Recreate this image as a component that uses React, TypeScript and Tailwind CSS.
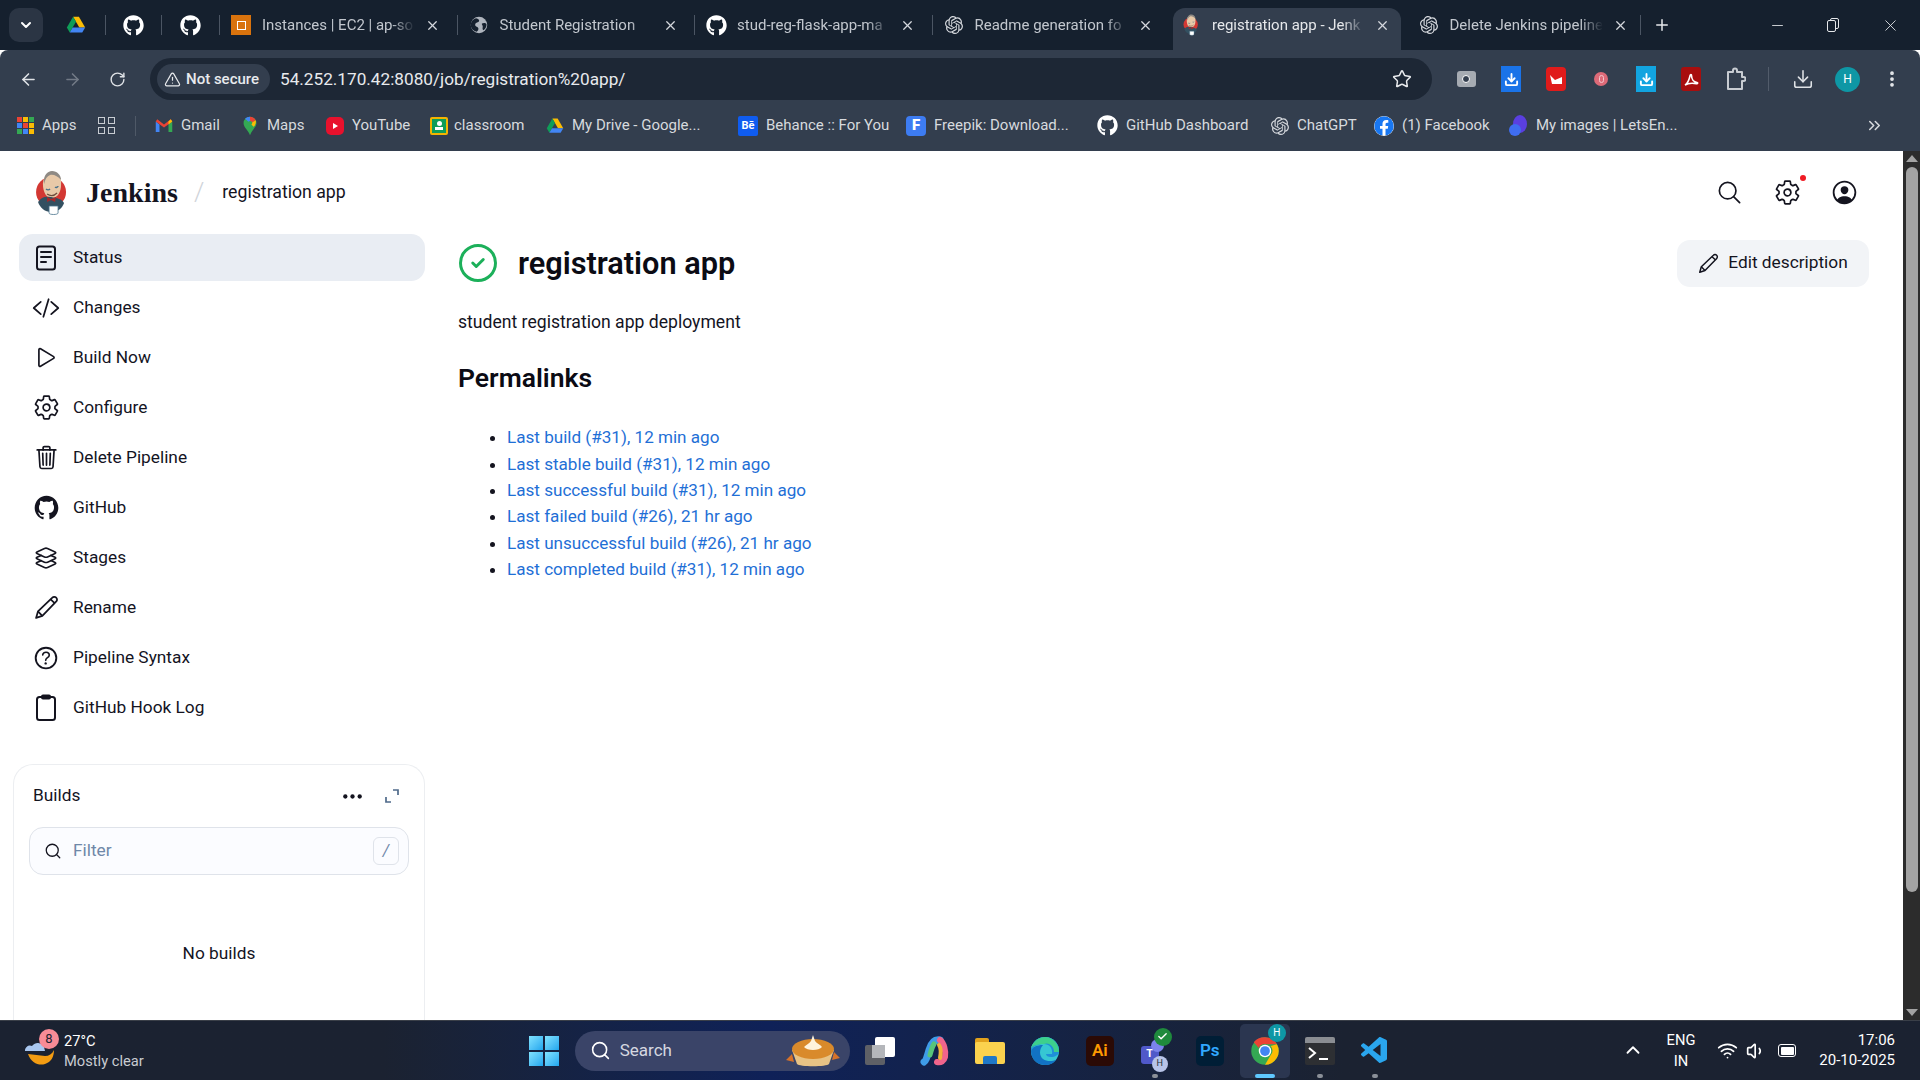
import React from 'react';
import {
  ArrowLeft, ArrowRight, RotateCw, Star, Download, EllipsisVertical, X, Plus, Minus, ChevronDown,
  TriangleAlert, ChevronsRight, Search, ChevronUp, Wifi, Volume1, Check, CircleCheck,
} from 'lucide-react';
import { FaGithub, FaFacebook } from 'react-icons/fa';
import { SiOpenai } from 'react-icons/si';
import { VscVscode } from 'react-icons/vsc';
import {
  IoCodeSlashOutline, IoPlayOutline, IoSettingsOutline, IoTrashOutline, IoLogoGithub, IoLayersOutline,
  IoHelpCircleOutline, IoSearchOutline, IoPersonCircleOutline, IoEllipsisHorizontal,
} from 'react-icons/io5';

const DriveIcon = ({ size = 18 }: { size?: number }) => (
  <svg width={size} height={size} viewBox="0 0 24 24">
    <path d="M8.5 2h7l7.5 13h-7z" fill="#fbbc04" />
    <path d="M8.5 2 1 15l3.5 6 7.5-13z" fill="#0f9d58" />
    <path d="M4.5 21h15l3.5-6H8z" fill="#4285f4" />
  </svg>
);

const GlobeIcon = () => (
  <svg width="18" height="18" viewBox="0 0 24 24">
    <circle cx="12" cy="12" r="11" fill="#aeb4bd" />
    <path d="M8 3c3 1 5 2 4 4s-4 1-5 4 3 3 4 5-1 4-2 5C4 20 1 16 1 12 1 8 4 4 8 3zM16 10c2-1 5-1 6 1 0 3-1 6-4 8-2-1-1-3-1-5s-2-3-1-4z" fill="#15202e" />
  </svg>
);

const PencilIcon = ({ size = 24 }: { size?: number }) => (
  <svg width={size} height={size} viewBox="0 0 24 24" fill="none" stroke="#14141f" strokeWidth="1.7" strokeLinejoin="round">
    <path d="M2 22l1.8-6.2L17.6 2.6a2.6 2.6 0 0 1 3.8 3.6L8 20z" />
    <path d="M3.8 15.8 8 20M16 4.2l3.8 3.6" />
  </svg>
);

const JenkinsFace = ({ size = 46 }: { size?: number }) => (
  <svg width={size * 0.72} height={size} viewBox="0 0 33 46">
    <circle cx="16" cy="22" r="15" fill="#d33833" />
    <path d="M8 17c-1-9 4-15 9-15s10 5 9 13c0 6-3 13-9 13S9 23 8 17z" fill="#e8c9a8" />
    <path d="M9 14C8 6 12 1 17 1s9 4 9 9c-3-4-8-6-11-5-3 1-5 4-6 9z" fill="#8f8a84" />
    <path d="M11 19c1 1 3 1 4 0M20 17c1 1 3 0 3-1" stroke="#49728b" strokeWidth="1.4" fill="none" />
    <path d="M12 24c3 2 7 2 10-1" stroke="#6d4b3b" strokeWidth="1.2" fill="none" />
    <path d="M3 32c3-5 7-6 13-5s11 2 13 6c-2 6-7 9-13 9S5 38 3 32z" fill="#335061" />
    <path d="M12 27l4 2 5-2-1 5-4-2-4 2z" fill="#a4282a" />
    <path d="M14 36h9v7c0 2-9 2-9 0z" fill="#fff" stroke="#49728b" strokeWidth="0.8" />
  </svg>
);

const ChromeIcon = () => (
  <svg width="30" height="30" viewBox="0 0 24 24">
    <circle cx="12" cy="12" r="11" fill="#34a853" />
    <path d="M12 1a11 11 0 0 1 9.5 5.5H12a5.5 5.5 0 0 0-5 3L3 5a11 11 0 0 1 9-4z" fill="#ea4335" />
    <path d="M21.5 6.5A11 11 0 0 1 12 23l4.7-8A5.5 5.5 0 0 0 16.5 8z" fill="#fbbc04" />
    <circle cx="12" cy="12" r="5" fill="#fff" />
    <circle cx="12" cy="12" r="3.9" fill="#4285f4" />
  </svg>
);

const AcrobatGlyph = () => (
  <svg width="16" height="16" viewBox="0 0 16 16" fill="none" stroke="#fff" strokeWidth="1.6">
    <path d="M2 14c2-1 4-5 5-9 .3-2 1.6-2 1.6 0 0 3 2 6 5.400 6.500 1 .2.8 1.300-.5 1.100C10 12 5 12 2 14z" />
  </svg>
);

const TabSep = ({ className = '' }: { className?: string }) => <div className={`w-px h-[20px] bg-[#4b5563] shrink-0 ${className}`} />;

const Tab = ({ icon, title, active, sep }: { icon: React.ReactNode; title: string; active?: boolean; sep?: boolean }) => (
  <div className={`flex items-center h-[42px] pl-[7px] pb-[8px] ${active ? 'w-[228px] mr-[9.500px] bg-[#333e4e] rounded-t-[12px] text-[#e6e8eb]' : 'w-[237.500px] text-[#c2c7ce]'}`}>
    <div className="w-[22px] flex justify-center shrink-0">{icon}</div>
    <span className="ml-[10px] w-[153px] overflow-hidden whitespace-nowrap text-[15px] [mask-image:linear-gradient(to_right,black_85%,transparent)]">{title}</span>
    <X size={15} className="ml-[10px] text-[#d5d8dd] shrink-0" strokeWidth={2} />
    {sep && <TabSep className="ml-auto mr-[3px]" />}
  </div>
);

const Ext = ({ children, className }: { children: React.ReactNode; className: string }) => (
  <div className={`flex items-center justify-center shrink-0 ${className}`}>{children}</div>
);

const bookmarks: { icon: React.ReactNode; label: string; width: string }[] = [
  {
    label: 'Gmail', width: 'w-[86px]',
    icon: (
      <svg width="18" height="18" viewBox="0 0 24 24">
        <path d="M1 6v14h5V10z" fill="#4285f4" /><path d="M23 6v14h-5V10z" fill="#34a853" />
        <path d="M1 6l11 8 11-8-2-3-9 7-9-7z" fill="#ea4335" /><path d="M18 6l3-3 2 3-5 4z" fill="#fbbc04" />
      </svg>
    ),
  },
  {
    label: 'Maps', width: 'w-[85px]',
    icon: (
      <svg width="18" height="20" viewBox="0 0 24 28">
        <path d="M12 1a9 9 0 0 1 9 9c0 6-7 10-9 17-2-7-9-11-9-17a9 9 0 0 1 9-9z" fill="#34a853" />
        <path d="M5 4a9 9 0 0 1 7-3v6a3 3 0 0 0-2 1z" fill="#4285f4" />
        <path d="M12 1a9 9 0 0 1 8 5l-5 3a3 3 0 0 0-3-2z" fill="#ea4335" />
        <path d="M20 6a9 9 0 0 1-3 9l-3-3a3 3 0 0 0 1-3z" fill="#fbbc04" />
      </svg>
    ),
  },
  {
    label: 'YouTube', width: 'w-[104px]',
    icon: (
      <div className="w-[18px] h-[18px] rounded-[5px] bg-[#e8112d] flex items-center justify-center">
        <div className="w-0 h-0 border-y-[3px] border-y-transparent border-l-[5px] border-l-white" />
      </div>
    ),
  },
  {
    label: 'classroom', width: 'w-[116px]',
    icon: (
      <div className="w-[18px] h-[18px] -mr-[2px] rounded-[2px] bg-[#f4b400] p-[2px]">
        <div className="w-full h-full bg-[#0f9d58] flex flex-col items-center pt-[2px]">
          <div className="w-[5px] h-[5px] rounded-full bg-white" />
          <div className="w-[8px] h-[3px] mt-px bg-white" />
        </div>
      </div>
    ),
  },
  { label: 'My Drive - Google...', width: 'w-[192px]', icon: <DriveIcon /> },
  {
    label: 'Behance :: For You', width: 'w-[168px]',
    icon: <div className="w-[20px] h-[20px] rounded-[2px] bg-[#0f5cf0] text-white text-[11px] font-bold flex items-center justify-center leading-none">Bē</div>,
  },
  {
    label: 'Freepik: Download...', width: 'w-[191px]',
    icon: <div className="w-[20px] h-[20px] rounded-[4px] bg-[#3d7cf2] text-white text-[15px] font-black flex items-center justify-center leading-none">F</div>,
  },
  { label: 'GitHub Dashboard', width: 'w-[174px]', icon: <FaGithub size={21} className="text-white" /> },
  { label: 'ChatGPT', width: 'w-[103px]', icon: <SiOpenai size={18} className="text-[#d5d8dd]" /> },
  { label: '(1) Facebook', width: 'w-[134px]', icon: <FaFacebook size={20} className="text-[#1877f2] bg-white rounded-full" /> },
  {
    label: 'My images | LetsEn...', width: 'w-[170px]',
    icon: (
      <svg width="20" height="22" viewBox="0 0 20 22">
        <ellipse cx="12" cy="9" rx="7" ry="9" fill="#5a3fe0" />
        <circle cx="7" cy="15" r="6" fill="#3f6df0" />
      </svg>
    ),
  },
];

const navItems: { label: string; icon: React.ReactNode }[] = [
  {
    label: 'Status',
    icon: (
      <svg width="22" height="26" viewBox="0 0 22 26" fill="none" stroke="#14141f" strokeWidth="2" strokeLinecap="round">
        <rect x="2" y="1.500" width="18" height="23" rx="2.500" />
        <path d="M6 7h10M6 12h10M6 17h5" />
      </svg>
    ),
  },
  { label: 'Changes', icon: <IoCodeSlashOutline size={28} /> },
  { label: 'Build Now', icon: <IoPlayOutline size={27} /> },
  { label: 'Configure', icon: <IoSettingsOutline size={27} /> },
  { label: 'Delete Pipeline', icon: <IoTrashOutline size={27} /> },
  { label: 'GitHub', icon: <IoLogoGithub size={27} /> },
  { label: 'Stages', icon: <IoLayersOutline size={26} /> },
  { label: 'Rename', icon: <PencilIcon size={25} /> },
  { label: 'Pipeline Syntax', icon: <IoHelpCircleOutline size={30} /> },
  {
    label: 'GitHub Hook Log',
    icon: (
      <svg width="22" height="28" viewBox="0 0 22 28" fill="none" stroke="#14141f" strokeWidth="2" strokeLinejoin="round">
        <rect x="2" y="3" width="18" height="23" rx="2.500" />
        <rect x="7" y="1.500" width="8" height="3" rx="1" />
      </svg>
    ),
  },
];

const permalinks = [
  'Last build (#31), 12 min ago',
  'Last stable build (#31), 12 min ago',
  'Last successful build (#31), 12 min ago',
  'Last failed build (#26), 21 hr ago',
  'Last unsuccessful build (#26), 21 hr ago',
  'Last completed build (#31), 12 min ago',
];

const TaskIcon = ({ children, dot }: { children: React.ReactNode; dot?: boolean }) => (
  <div className="relative w-[50px] h-[54px] flex items-center justify-center shrink-0">
    {children}
    {dot && <div className="absolute bottom-0 left-[22px] w-[6px] h-[4px] rounded-full bg-[#8a8f98]" />}
  </div>
);

export default function App() {
  return (
    <div className="w-[1920px] h-[1080px] flex flex-col overflow-hidden font-[Roboto,sans-serif] bg-white">
      {/* tab strip */}
      <div className="h-[50px] bg-[#15202e] flex items-end shrink-0 pl-[9px]">
        <div className="self-start mt-[8px] w-[34px] h-[34px] rounded-[10px] bg-[#2b3544] flex items-center justify-center shrink-0">
          <ChevronDown size={16} className="text-white" strokeWidth={3} />
        </div>
        <div className="flex items-end h-[42px] self-end">
          <div className="flex items-center h-[34px] self-start">
            <div className="w-[23px]" />
            <DriveIcon size={20} />
            <div className="w-[19px]" />
            <TabSep />
            <FaGithub size={21} className="text-white mx-[17px]" />
            <TabSep />
            <FaGithub size={21} className="text-white mx-[18px]" />
            <TabSep />
            <div className="w-[3px]" />
          </div>
          <Tab
            title="Instances | EC2 | ap-so"
            sep
            icon={
              <div className="w-[20px] h-[20px] bg-[#d9730d] flex items-center justify-center">
                <div className="w-[9px] h-[9px] border border-white" />
              </div>
            }
          />
          <Tab title="Student Registration" sep icon={<GlobeIcon />} />
          <Tab title="stud-reg-flask-app-ma" sep icon={<FaGithub size={21} className="text-white" />} />
          <Tab title="Readme generation fo" icon={<SiOpenai size={18} className="text-[#d5d8dd]" />} />
          <Tab title="registration app - Jenk" active icon={<JenkinsFace size={22} />} />
          <Tab title="Delete Jenkins pipeline" icon={<SiOpenai size={18} className="text-[#d5d8dd]" />} />
          <TabSep className="-ml-[8px] mb-[15px]" />
          <Plus size={18} className="text-[#e6e8eb] ml-[12px] mb-[16px]" strokeWidth={2} />
        </div>
        <div className="ml-auto self-start flex items-center h-[50px] text-[#e6e8eb]">
          <Minus size={17} strokeWidth={1.200} className="mr-[41px]" />
          <div className="relative w-[12px] h-[14px] mr-[42px]">
            <div className="absolute right-0 top-0 w-[9px] h-[11px] border border-[#e6e8eb] rounded-[2px]" />
            <div className="absolute left-0 bottom-0 w-[9px] h-[12px] border border-[#e6e8eb] rounded-[2px] bg-[#15202e]" />
          </div>
          <X size={19} strokeWidth={1.100} className="mr-[20px]" />
        </div>
      </div>

      {/* toolbar */}
      <div className="h-[50px] bg-[#333e4e] flex items-end shrink-0 rounded-t-[8px]">
        <div className="flex items-center h-[42px] w-full">
          <ArrowLeft size={19} className="text-[#dfe2e6] ml-[19px]" />
          <ArrowRight size={19} className="text-[#727a86] ml-[25px]" />
          <RotateCw size={17} className="text-[#dfe2e6] ml-[27px]" />
          <div className="ml-[24px] w-[1282px] h-[42px] rounded-full bg-[#1d2735] flex items-center pl-[7px] pr-[20px] shrink-0">
            <div className="h-[30px] w-[113px] pl-[7px] rounded-full bg-[#333e4e] flex items-center gap-[5px] text-[#e8eaed] text-[15px] font-medium whitespace-nowrap">
              <TriangleAlert size={17} strokeWidth={1.700} />
              Not secure
            </div>
            <span className="ml-[10px] mt-[2px] text-[17.200px] text-[#e8eaed]">54.252.170.42:8080/job/registration%20app/</span>
            <Star size={20} className="ml-auto text-[#e8eaed]" strokeWidth={1.800} />
          </div>
          <div className="flex items-center ml-[23px]">
            <Ext className="w-[22px]">
              <div className="relative w-[19px] h-[16px] rounded-[3px] bg-[#a6abb2] flex items-center justify-center">
                <div className="w-[8px] h-[8px] rounded-full bg-[#333e4e] border border-white" />
              </div>
            </Ext>
            <Ext className="w-[20px] ml-[24px] h-[26px] bg-[#1a73e8]"><Download size={15} className="text-white" strokeWidth={3} /></Ext>
            <Ext className="w-[20px] ml-[25px] h-[24px] rounded-[4px] bg-[#e01b1b]">
              <svg width="14" height="14" viewBox="0 0 14 14"><path d="M1 3l5 5 7-3v7H3z" fill="#fff" /></svg>
            </Ext>
            <Ext className="w-[14px] h-[14px] ml-[28px] rounded-full bg-[#dd6a78]">
              <div className="w-[5px] h-[8px] rounded-full border border-[#f4c6cc]" />
            </Ext>
            <Ext className="w-[20px] ml-[28px] h-[26px] bg-[#12a4e0]"><Download size={15} className="text-white" strokeWidth={3} /></Ext>
            <Ext className="w-[20px] ml-[25px] h-[24px] rounded-[3px] bg-[#a80e0e]"><AcrobatGlyph /></Ext>
            <Ext className="w-[20px] h-[24px] ml-[25px]">
              <svg width="20" height="24" viewBox="0 0 20 24" fill="none" stroke="#c8ccd2" strokeWidth="2" strokeLinejoin="round">
                <path d="M2 5h5V3.500a2 2 0 0 1 4 0V5h5v5h1.500a2 2 0 0 1 0 4H16v8H2z" />
              </svg>
            </Ext>
            <div className="w-px h-[24px] bg-[#525c6b] ml-[22px]" />
            <Download size={22} className="text-[#dfe2e6] ml-[23px]" strokeWidth={1.700} />
            <div className="ml-[21px] w-[25px] h-[25px] rounded-full bg-[#0e97a5] text-white text-[12px] flex items-center justify-center">H</div>
            <EllipsisVertical size={20} className="text-[#e8eaed] ml-[22px]" strokeWidth={2.500} />
          </div>
        </div>
      </div>

      {/* bookmarks */}
      <div className="h-[51px] bg-[#333e4e] flex items-center shrink-0 text-[15px] text-[#d7dade]">
        <div className="ml-[17px] grid grid-cols-3 gap-[1px] w-[17px] h-[17px]">
          {['bg-[#ea4335]', 'bg-[#fbbc04]', 'bg-[#34a853]', 'bg-[#4285f4]', 'bg-[#ea4335]', 'bg-[#fbbc04]', 'bg-[#34a853]', 'bg-[#4285f4]', 'bg-[#fbbc04]'].map((c, i) => (
            <div key={i} className={c} />
          ))}
        </div>
        <span className="ml-[8px] w-[56px]">Apps</span>
        <div className="grid grid-cols-2 gap-[3px] w-[17px]">
          {[0, 1, 2, 3].map(i => <div key={i} className="h-[7px] border-[1.500px] border-[#c8ccd2]" />)}
        </div>
        <div className="w-px h-[20px] bg-[#4f5967] ml-[20px] mr-[19px]" />
        {bookmarks.map(b => (
          <div key={b.label} className={`flex items-center gap-[8px] whitespace-nowrap shrink-0 ${b.width}`}>
            {b.icon}
            <span>{b.label}</span>
          </div>
        ))}
        <ChevronsRight size={19} className="ml-auto mr-[36px] text-[#d7dade]" />
      </div>

      {/* page */}
      <div className="flex-1 min-h-0 flex overflow-hidden">
        <div className="flex-1 min-w-0 flex flex-col text-[#14141f] overflow-hidden">
          <header className="h-[83px] flex items-center shrink-0 pl-[35px] pr-[44px]">
            <JenkinsFace />
            <span className="ml-[18px] font-['Liberation_Serif',serif] font-bold text-[28px] leading-none">Jenkins</span>
            <span className="ml-[16px] text-[#d0d4da] text-[26px] font-light">/</span>
            <span className="ml-[18px] text-[17.700px]">registration app</span>
            <div className="ml-auto flex items-center">
              <IoSearchOutline size={27} />
              <div className="relative ml-[31px]">
                <IoSettingsOutline size={27} />
                <div className="absolute -top-[4px] -right-[5px] w-[6px] h-[6px] rounded-full bg-[#f01b24]" />
              </div>
              <IoPersonCircleOutline size={29} className="ml-[29px]" />
            </div>
          </header>
          <div className="flex flex-1 min-h-0">
            <aside className="w-[425px] shrink-0 flex flex-col">
              <nav className="ml-[19px] flex flex-col gap-[3px]">
                {navItems.map(n => (
                  <div key={n.label} className={`h-[47px] flex items-center rounded-[14px] ${n.label === 'Status' ? 'bg-[#e9edf3]' : ''}`}>
                    <div className="w-[54px] flex justify-center shrink-0">{n.icon}</div>
                    <span className="text-[17.300px]">{n.label}</span>
                  </div>
                ))}
              </nav>
              <section className="ml-[13px] mt-[33px] flex-1 rounded-t-[20px] border border-b-0 border-[#eceef1] px-[15px] pt-[16px]">
                <div className="flex items-center h-[30px]">
                  <span className="ml-[4px] text-[17.300px]">Builds</span>
                  <IoEllipsisHorizontal size={23} className="ml-auto" />
                  <svg width="16" height="16" viewBox="0 0 16 16" fill="none" stroke="#4f6a8a" strokeWidth="1.700" className="ml-[20px] mr-[9px]">
                    <path d="M9 2h5v5M2 9v5h5" />
                  </svg>
                </div>
                <div className="mt-[16px] h-[48px] rounded-[14px] border border-[#dfe3ea] bg-[#fbfcff] flex items-center pl-[14px] pr-[9px]">
                  <Search size={18} className="text-[#14141f]" strokeWidth={1.700} />
                  <span className="ml-[11px] text-[17.300px] text-[#6f88a8]">Filter</span>
                  <div className="ml-auto w-[26px] h-[28px] rounded-[6px] border border-[#dfe3ea] flex items-center justify-center">
                    <span className="text-[#6f88a8] italic text-[16px]">/</span>
                  </div>
                </div>
                <div className="mt-[66px] text-center text-[17.300px]">No builds</div>
              </section>
            </aside>
            <main className="flex-1 min-w-0 pl-[33px] pr-[34px]">
              <div className="flex items-center h-[48px] mt-[5px]">
                <CircleCheck size={42} strokeWidth={1.700} className="text-[#1cb05a] -ml-[1px]" />
                <h1 className="ml-[19px] mt-[2px] text-[30.700px] font-semibold text-[#0b0b14]">registration app</h1>
                <div className="ml-auto h-[47px] w-[192px] rounded-[13px] bg-[#f2f4f7] flex items-center justify-center gap-[9px] text-[17.300px]">
                  <PencilIcon size={21} />
                  Edit description
                </div>
              </div>
              <p className="mt-[22px] text-[17.600px]">student registration app deployment</p>
              <h2 className="mt-[23px] text-[26.500px] font-semibold text-[#0b0b14]">Permalinks</h2>
              <ul className="mt-[26px] list-disc pl-[49px] text-[17.100px] leading-[26.400px] text-[#1f6fd6] marker:text-[#14141f]">
                {permalinks.map(p => <li key={p}>{p}</li>)}
              </ul>
            </main>
          </div>
        </div>
        {/* scrollbar */}
        <div className="w-[17px] shrink-0 bg-[#2c2c2c] flex flex-col items-center pt-[4px]">
          <div className="w-0 h-0 border-x-[6px] border-x-transparent border-b-[7px] border-b-[#a3a3a3]" />
          <div className="w-[12px] h-[725px] mt-[5px] rounded-full bg-[#a3a3a3]" />
          <div className="mt-auto mb-[4px] w-0 h-0 border-x-[6px] border-x-transparent border-t-[7px] border-t-[#a3a3a3]" />
        </div>
      </div>

      {/* taskbar */}
      <div className="h-[60px] shrink-0 flex items-center relative bg-linear-to-r from-[#1b2231] from-20% via-[#0f2158] via-40% to-[#1b2231] to-70% border-t border-[#3a3f48] text-white">
        <div className="relative ml-[25px] w-[34px] h-[34px]">
          <svg width="34" height="32" viewBox="0 0 34 32" className="mt-[3px]">
            <path d="M3 17c3 9 11 12 17 10 6-2 9-7 9-14-2 4-5 6-9 6z" fill="#f39c12" />
            <path d="M0 14a5 5 0 0 1 7-5 7 7 0 0 1 12 1l1 4z" fill="#a9c7f0" />
          </svg>
          <div className="absolute -top-[5px] left-[14px] w-[20px] h-[20px] rounded-full bg-[#f78b96] text-[#1b2231] text-[13px] flex items-center justify-center">8</div>
        </div>
        <div className="ml-[5px] leading-[20px]">
          <div className="text-[14.700px]">27°C</div>
          <div className="text-[14.700px] text-[#c9ccd2]">Mostly clear</div>
        </div>
        <div className="ml-[385px] grid grid-cols-2 gap-[2px] w-[30px] h-[30px]">
          {[0, 1, 2, 3].map(i => <div key={i} className="bg-linear-to-br from-[#7fe3ff] to-[#1aa6ee]" />)}
        </div>
        <div className="ml-[16px] w-[275px] h-[40px] rounded-full bg-[#3a4468] flex items-center pl-[15px] pr-[8px]">
          <Search size={21} className="text-white" strokeWidth={1.800} />
          <span className="ml-[9px] text-[17px] text-[#d5d8e0]">Search</span>
          <div className="ml-auto relative w-[58px] h-[34px] flex justify-center">
            <svg width="58" height="34" viewBox="0 0 58 34">
              <path d="M2 26l6-6 2 8zM56 24l-8 2 2-8z" fill="#d5722a" />
              <path d="M8 16h42l-5 14c-2 3-30 3-32 0z" fill="#e8c385" />
              <ellipse cx="29" cy="15" rx="21" ry="10" fill="#d98a2b" />
              <path d="M20 13c3-3 5-3 7-6l2-6 2 6c2 3 5 3 7 6-3 4-15 4-18 0z" fill="#fff3dc" />
            </svg>
          </div>
        </div>
        <div className="ml-[5px] flex items-center gap-[5px]">
          <TaskIcon>
            <div className="relative w-[30px] h-[28px]">
              <div className="absolute left-0 bottom-0 w-[20px] h-[20px] rounded-[2px] bg-[#5e6066]" />
              <div className="absolute right-0 top-0 w-[20px] h-[20px] rounded-[2px] bg-white" />
              <div className="absolute left-[7px] top-[8px] w-[13px] h-[13px] bg-[#b4b6ba]" />
            </div>
          </TaskIcon>
          <TaskIcon>
            <svg width="30" height="32" viewBox="0 0 30 32" fill="none" strokeLinecap="round">
              <path d="M20 5C14 4 11 8 9 15s-3 11-5 12" stroke="#3f9ce8" strokeWidth="7" />
              <path d="M14 9c-2 3-3 7-4 11" stroke="#58c47a" strokeWidth="5" />
              <path d="M20 5c4 3 6 11 5 17-1 4-4 6-8 5" stroke="#f0648c" strokeWidth="6" />
              <path d="M19 10c2 3 2 8 1 13" stroke="#f2b23c" strokeWidth="4" />
            </svg>
          </TaskIcon>
          <TaskIcon>
            <div className="relative w-[30px] h-[26px]">
              <div className="absolute top-0 left-0 w-[14px] h-[8px] rounded-t-[2px] bg-[#e2a21c]" />
              <div className="absolute top-[4px] inset-x-0 bottom-0 rounded-[2px] bg-[#fbd24e]" />
              <div className="absolute bottom-0 left-[8px] w-[14px] h-[8px] rounded-t-[2px] bg-[#1f78c8]" />
            </div>
          </TaskIcon>
          <TaskIcon>
            <svg width="30" height="30" viewBox="0 0 30 30">
              <circle cx="15" cy="15" r="14" fill="#36c6d3" />
              <path d="M1 15A14 14 0 0 1 29 15c0 4-4 6-8 6-3 0-5-1-5-3h6c1-6-3-10-8-10C8 8 2 10 1 15z" fill="#1f8fd8" />
              <path d="M1 15c0 8 6 14 14 14 5 0 9-2 11-5-3 1-9 2-13-1-4-3-4-10 0-14C7 9 2 11 1 15z" fill="#1272c4" />
              <path d="M14 8c5-2 10 2 10 8h5c0-8-6-15-14-15C8 1 3 6 1 12c3-3 8-4 13-4z" fill="#3dd08c" />
            </svg>
          </TaskIcon>
          <TaskIcon>
            <div className="w-[28px] h-[30px] rounded-[5px] bg-[#2b0a05] text-[#ff9a00] text-[17px] font-semibold flex items-center justify-center">Ai</div>
          </TaskIcon>
          <TaskIcon dot>
            <div className="relative w-[34px] h-[34px]">
              <div className="absolute left-[3px] top-[12px] w-[18px] h-[18px] rounded-[3px] bg-[#5059c9] text-white text-[11px] font-bold flex items-center justify-center">T</div>
              <div className="absolute left-[13px] top-[5px] w-[13px] h-[13px] rounded-full bg-[#7b83eb]" />
              <div className="absolute right-0 top-[-6px] w-[18px] h-[18px] rounded-full bg-[#1f8a3d] flex items-center justify-center">
                <Check size={11} strokeWidth={3} className="text-white" />
              </div>
              <div className="absolute left-[14px] bottom-[-4px] w-[16px] h-[16px] rounded-full bg-[#b8c4e8] text-[#223333] text-[9px] flex items-center justify-center">H</div>
            </div>
          </TaskIcon>
          <TaskIcon>
            <div className="w-[28px] h-[30px] rounded-[5px] bg-[#001e36] text-[#31a8ff] text-[17px] font-semibold flex items-center justify-center">Ps</div>
          </TaskIcon>
          <div className="relative w-[50px] h-[54px] rounded-[5px] bg-[#2b3650] flex items-center justify-center shrink-0">
            <ChromeIcon />
            <div className="absolute top-0 right-[4px] w-[18px] h-[18px] rounded-full bg-[#0e97a5] text-white text-[10px] flex items-center justify-center">H</div>
            <div className="absolute bottom-0 left-[15px] w-[20px] h-[4px] rounded-full bg-[#5fc8ff]" />
          </div>
          <TaskIcon dot>
            <div className="w-[30px] h-[28px] bg-[#2d2f33] rounded-[2px] overflow-hidden">
              <div className="h-[6px] bg-[#8a8d92]" />
              <svg width="30" height="22" viewBox="0 0 30 22" fill="none" stroke="#fff" strokeWidth="2">
                <path d="M4 5l6 5-6 5M14 16h9" />
              </svg>
            </div>
          </TaskIcon>
          <TaskIcon dot>
            <VscVscode size={32} className="text-[#2aa6ee]" />
          </TaskIcon>
        </div>
        <ChevronUp size={22} strokeWidth={2} className="absolute left-[1622px] top-[18px]" />
        <div className="absolute left-[1661px] top-[9px] w-[40px] text-center text-[14.700px] leading-[21px]">
          <div>ENG</div>
          <div>IN</div>
        </div>
        <Wifi size={21} className="absolute left-[1717px] top-[19px]" />
        <Volume1 size={20} className="absolute left-[1746px] top-[20px]" />
        <div className="absolute left-[1778px] top-[23px] w-[18px] h-[13px] rounded-[3px] border-[1.500px] border-white p-[1.500px]">
          <div className="w-full h-full bg-white rounded-[1px]" />
        </div>
        <div className="absolute right-[25px] top-[9px] text-right text-[15px] leading-[20px]">
          <div>17:06</div>
          <div>20-10-2025</div>
        </div>
      </div>
    </div>
  );
}
